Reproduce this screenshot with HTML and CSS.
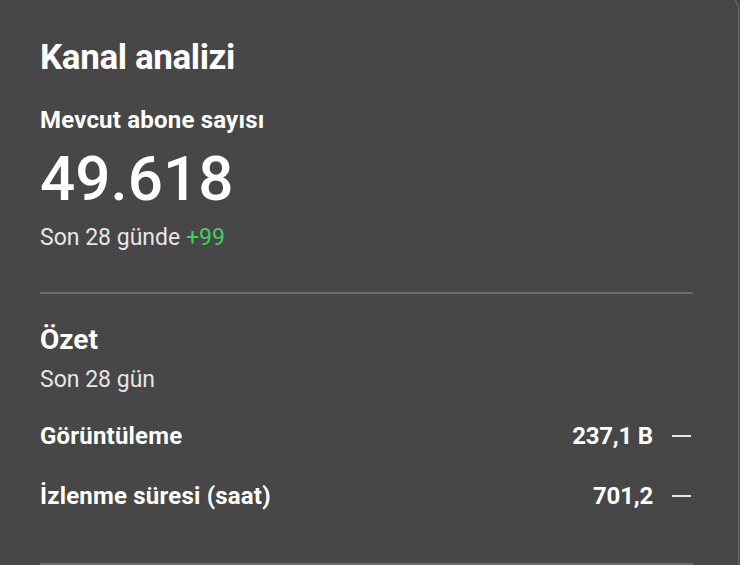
FILE: index.html
```html
<!DOCTYPE html>
<html lang="tr">
<head>
<meta charset="utf-8">
<title>Kanal analizi</title>
<link rel="stylesheet" href="styles.css">
</head>
<body>
<div class="card">
  <h1 class="title">Kanal analizi</h1>
  <section class="subs">
    <div class="label">Mevcut abone sayısı</div>
    <div class="big">49.618</div>
    <div class="delta">Son 28 günde <span class="up">+99</span></div>
  </section>
  <hr class="divider">
  <section class="summary">
    <div class="sum-title">Özet</div>
    <div class="sum-sub">Son 28 gün</div>
    <div class="rows">
      <div class="row">
        <span class="row-label">Görüntüleme</span>
        <span class="row-value">237,1 B</span>
        <span class="row-dash"></span>
      </div>
      <div class="row">
        <span class="row-label">İzlenme süresi (saat)</span>
        <span class="row-value">701,2</span>
        <span class="row-dash"></span>
      </div>
    </div>
  </section>
  <hr class="divider bottom">
</div>
</body>
</html>
```
FILE: styles.css
```css
html, body {
  margin: 0;
  padding: 0;
  background: #474747;
  height: 100%;
  overflow: hidden;
}
body {
  font-family: Roboto, "Liberation Sans", Arial, sans-serif;
  color: #ffffff;
}
.card {
  box-sizing: border-box;
  width: 739px;
  height: 571px;
  margin-top: -6px;
  padding: 43px 47px 0 40px;
  background: #474747;
  border-top: 1px solid #5e5e5e;
  border-right: 1px solid #6a6a6a;
  border-top-right-radius: 16px;
  overflow: hidden;
}
.title {
  margin: 0;
  font-size: 35px;
  line-height: 40px;
  font-weight: 700;
  letter-spacing: -0.4px;
}
.subs {
  margin-top: 28px;
}
.label {
  font-size: 24px;
  line-height: 28px;
  font-weight: 700;
  letter-spacing: 0.2px;
}
.big {
  font-size: 62px;
  line-height: 64px;
  font-weight: 500;
  margin-top: 13px;
}
.delta {
  font-size: 23px;
  line-height: 28px;
  color: #e6e6e6;
  margin-top: 13px;
}
.up {
  color: #41d05e;
}
.divider {
  border: 0;
  height: 2px;
  background: #6c6c6c;
  margin: 40px -2px 0 0;
}
.summary {
  padding-top: 29px;
}
.sum-title {
  font-size: 28px;
  line-height: 34px;
  font-weight: 700;
  letter-spacing: 0;
}
.sum-sub {
  font-size: 23px;
  line-height: 28px;
  color: #e6e6e6;
  margin-top: 9px;
}
.rows {
  margin-top: 12px;
}
.row {
  display: flex;
  align-items: center;
  height: 60px;
  font-size: 24px;
  line-height: 28px;
  font-weight: 700;
  letter-spacing: 0.2px;
}
.row-label {
  flex: 1;
}
.row-value {
  letter-spacing: -0.2px;
}
.row-dash {
  width: 19px;
  height: 2px;
  background: #e8e8e8;
  margin-left: 19px;
}
.bottom {
  margin-top: 37px;
}
```
